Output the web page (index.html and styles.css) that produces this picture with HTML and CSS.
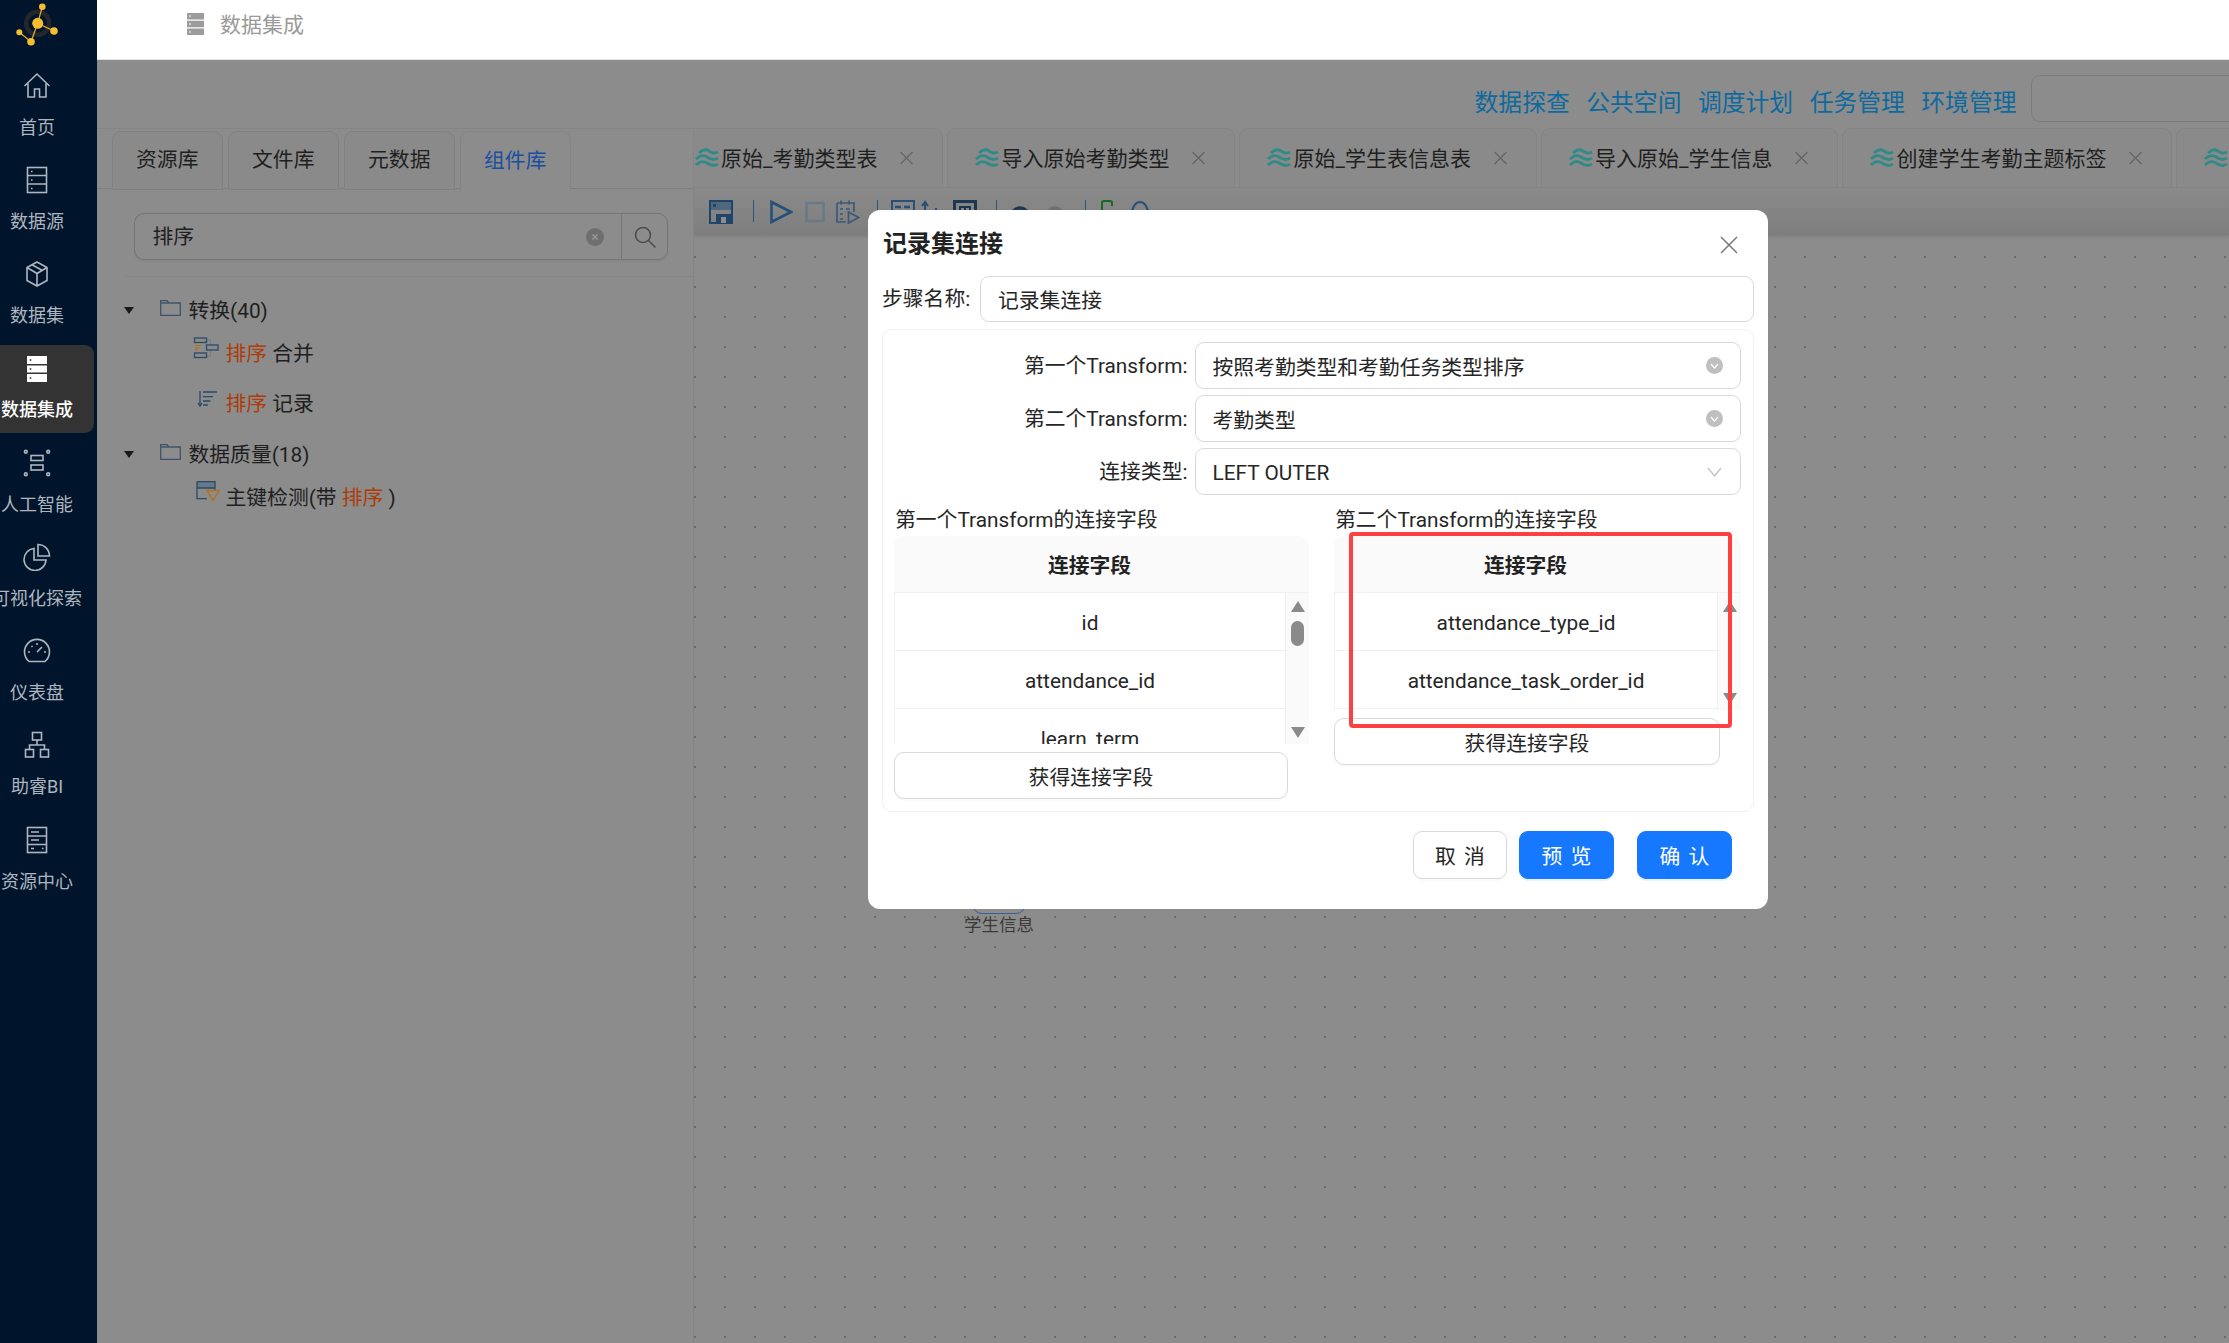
FILE: index.html
```html
<!DOCTYPE html>
<html lang="zh">
<head>
    <meta charset="UTF-8">
    <title>数据集成</title>
    <link rel="stylesheet" href="styles.css">
</head>
<body>
    <aside class="sidebar">
        <div class="logo">
            <svg width="97" height="50" viewBox="0 0 97 50">
                <circle cx="37.700" cy="23.300" r="11.500" fill="none" stroke="#23272c" stroke-width="4.500"/>
                <path d="M37.700 23.300L42.300 6.700M37.700 23.300L54 31M37.700 23.300L31 41.700L19.300 32.300" stroke="#e0aa2c" stroke-width="1.300" fill="none"/>
                <circle cx="37.700" cy="23.300" r="5.500" fill="#f6bd2e"/>
                <circle cx="42.300" cy="6.700" r="3.300" fill="#f6bd2e"/>
                <circle cx="54" cy="31" r="3.800" fill="#f6bd2e"/>
                <circle cx="19.300" cy="32.300" r="3" fill="#f6bd2e"/>
                <circle cx="31" cy="41.700" r="3.800" fill="#f6bd2e"/>
            </svg>
        </div>
        <div class="side-item">
            <svg class="side-icon" viewBox="0 0 28 28"><path d="M1.500 14L14 2l12.500 12M5 11.500V25h6.500v-8h5v8H23V11.500"/></svg>
            <span>首页</span>
        </div>
        <div class="side-item">
            <svg class="side-icon" viewBox="0 0 28 28"><rect x="4.500" y="1.500" width="19" height="25"/><path d="M4.500 9.500h19M4.500 18h19M8 5.500h1.500M8 14h1.500M8 22.500h1.500"/></svg>
            <span>数据源</span>
        </div>
        <div class="side-item">
            <svg class="side-icon" viewBox="0 0 28 28"><path d="M14 2l10 5.500v13L14 26 4 20.500v-13zM4 7.500l10 6 10-6M14 13.500V26M9 4.800l10 5.500"/></svg>
            <span>数据集</span>
        </div>
        <div class="side-item active">
            <svg class="side-icon solid" viewBox="0 0 28 28"><path d="M4 1h20v8H4zM4 10.500h20v7H4zM4 19h20v8H4z"/><circle cx="7.500" cy="5" r="1" fill="#555"/><circle cx="7.500" cy="14" r="1" fill="#555"/><circle cx="7.500" cy="23" r="1" fill="#555"/></svg>
            <span>数据集成</span>
        </div>
        <div class="side-item">
            <svg class="side-icon" viewBox="0 0 28 28"><rect x="8" y="6.500" width="12" height="5"/><rect x="8" y="16" width="12" height="5"/><circle cx="2.800" cy="2.800" r="1.400"/><circle cx="25.200" cy="2.800" r="1.400"/><circle cx="2.800" cy="25.200" r="1.400"/><circle cx="25.200" cy="25.200" r="1.400"/></svg>
            <span>人工智能</span>
        </div>
        <div class="side-item">
            <svg class="side-icon" viewBox="0 0 28 28"><path d="M11 5.500A11 11 0 1 0 23 17H11zM15 1.500A11.500 11.500 0 0 1 26.500 13H15z"/></svg>
            <span>可视化探索</span>
        </div>
        <div class="side-item">
            <svg class="side-icon" viewBox="0 0 28 28"><path d="M6 24.500A12.500 12.500 0 1 1 22 24.500zM14 15l5-5M5 15h2M21 15h2M8.500 9l1 1M14 6v2"/></svg>
            <span>仪表盘</span>
        </div>
        <div class="side-item">
            <svg class="side-icon" viewBox="0 0 28 28"><rect x="9.500" y="1.500" width="9" height="7.500"/><rect x="2.500" y="18.500" width="8" height="7.500"/><rect x="17.500" y="18.500" width="8" height="7.500"/><path d="M14 9v5M6.500 18.500V14h15v4.500"/></svg>
            <span>助睿BI</span>
        </div>
        <div class="side-item">
            <svg class="side-icon" viewBox="0 0 28 28"><rect x="4.500" y="1.500" width="19" height="25"/><path d="M4.500 10h19M4.500 18.500h19M8 6h8M8 14h8M8 22.500h3M19 22.500h1.500"/></svg>
            <span>资源中心</span>
        </div>
    </aside>

    <div class="content">
        <header class="topbar">
            <svg class="topbar-icon" viewBox="0 0 17 22"><path d="M0 0h17v6.500H0zM0 7.800h17v6.500H0zM0 15.500h17V22H0z" fill="#9c9c9c"/><path d="M2 3h2M2 11h2M2 19h2" stroke="#fff" stroke-width="1.200"/></svg>
            <span>数据集成</span>
        </header>

        <main class="main">
            <nav class="links">
                <a>数据探查</a>
                <a>公共空间</a>
                <a>调度计划</a>
                <a>任务管理</a>
                <a>环境管理</a>
                <div class="links-input"></div>
            </nav>

            <div class="workspace">
                <section class="library">
                    <div class="lib-tabs">
                        <div class="lib-tab">资源库</div>
                        <div class="lib-tab">文件库</div>
                        <div class="lib-tab">元数据</div>
                        <div class="lib-tab current">组件库</div>
                    </div>
                    <div class="search">
                        <div class="search-input">
                            <span>排序</span>
                            <svg width="18" height="18" viewBox="0 0 18 18"><circle cx="9" cy="9" r="9" fill="#6f6f6f"/><path d="M6.500 6.500l5 5M11.500 6.500l-5 5" stroke="#9a9a9a" stroke-width="1.300"/></svg>
                        </div>
                        <div class="search-btn">
                            <svg width="24" height="24" viewBox="0 0 24 24"><circle cx="10" cy="10" r="7.500" fill="none" stroke="#4c4c4c" stroke-width="1.600"/><path d="M15.500 15.500L22.500 22.500" stroke="#4c4c4c" stroke-width="1.600"/></svg>
                        </div>
                    </div>
                    <div class="lib-divider"></div>

                    <div class="tree">
                        <div class="tree-branch">
                            <i class="tree-arrow"></i>
                            <svg class="folder" viewBox="0 0 21 16"><path d="M.7 15.300V.7h6.500l1.500 2.300h11.600v12.300zM.7 3h8" fill="none" stroke="#3f5468" stroke-width="1.300"/></svg>
                            <span>转换(40)</span>
                        </div>
                        <div class="tree-leaf">
                            <svg class="leaf-icon" viewBox="0 0 28 22"><path d="M13.500 3h4v5M13.500 19h4v-6" fill="none" stroke="#6f7f8f"/><g fill="none" stroke="#2a4a66" stroke-width="1.300"><rect x="1.500" y="1" width="12" height="4.500"/><rect x="13.500" y="8" width="11.500" height="5"/><rect x="1.500" y="16" width="12" height="4.500"/></g><path d="M2 8.500h6M2 10.800h4.500M2 13h3" stroke="#b5701a" stroke-width="1.200"/></svg>
                            <span><em>排序</em> 合并</span>
                        </div>
                        <div class="tree-leaf">
                            <svg class="leaf-icon" viewBox="0 0 28 22"><path d="M7 4v14M5 16l2 3 2-3M10 5h14M10 9.700h10M10 14h7.500M10 18h5" fill="none" stroke="#2a4a66" stroke-width="1.300"/></svg>
                            <span><em>排序</em> 记录</span>
                        </div>
                        <div class="tree-branch">
                            <i class="tree-arrow"></i>
                            <svg class="folder" viewBox="0 0 21 16"><path d="M.7 15.300V.7h6.500l1.500 2.300h11.600v12.300zM.7 3h8" fill="none" stroke="#3f5468" stroke-width="1.300"/></svg>
                            <span>数据质量(18)</span>
                        </div>
                        <div class="tree-leaf">
                            <svg class="leaf-icon" viewBox="0 0 28 22"><path d="M4 1h18v6H4z" fill="#66788a"/><path d="M4 .7h18v8M4 .7v17h10M4 7h18" fill="none" stroke="#2a4a66" stroke-width="1.300"/><path d="M14 9.500h12l-6 10z" fill="none" stroke="#b5701a" stroke-width="1.400"/></svg>
                            <span>主键检测(带 <em>排序</em> )</span>
                        </div>
                    </div>
                </section>

                <section class="editor">
                    <div class="job-tabs">
                        <div class="job-tab">
                            <svg class="wave" viewBox="0 0 24 20"><path d="M4 5C8 1 11 1 14 3S19 6 23 4M1 11C5 7 9 7 12 9S19 13 23 10M1 17C5 13 9 13 12 15S19 19 23 16"/></svg>
                            <span>原始_考勤类型表</span>
                            <svg class="job-close" viewBox="0 0 14 14"><path d="M1 1l12 12M13 1L1 13"/></svg>
                        </div>
                        <div class="job-tab">
                            <svg class="wave" viewBox="0 0 24 20"><path d="M4 5C8 1 11 1 14 3S19 6 23 4M1 11C5 7 9 7 12 9S19 13 23 10M1 17C5 13 9 13 12 15S19 19 23 16"/></svg>
                            <span>导入原始考勤类型</span>
                            <svg class="job-close" viewBox="0 0 14 14"><path d="M1 1l12 12M13 1L1 13"/></svg>
                        </div>
                        <div class="job-tab">
                            <svg class="wave" viewBox="0 0 24 20"><path d="M4 5C8 1 11 1 14 3S19 6 23 4M1 11C5 7 9 7 12 9S19 13 23 10M1 17C5 13 9 13 12 15S19 19 23 16"/></svg>
                            <span>原始_学生表信息表</span>
                            <svg class="job-close" viewBox="0 0 14 14"><path d="M1 1l12 12M13 1L1 13"/></svg>
                        </div>
                        <div class="job-tab">
                            <svg class="wave" viewBox="0 0 24 20"><path d="M4 5C8 1 11 1 14 3S19 6 23 4M1 11C5 7 9 7 12 9S19 13 23 10M1 17C5 13 9 13 12 15S19 19 23 16"/></svg>
                            <span>导入原始_学生信息</span>
                            <svg class="job-close" viewBox="0 0 14 14"><path d="M1 1l12 12M13 1L1 13"/></svg>
                        </div>
                        <div class="job-tab">
                            <svg class="wave" viewBox="0 0 24 20"><path d="M4 5C8 1 11 1 14 3S19 6 23 4M1 11C5 7 9 7 12 9S19 13 23 10M1 17C5 13 9 13 12 15S19 19 23 16"/></svg>
                            <span>创建学生考勤主题标签</span>
                            <svg class="job-close" viewBox="0 0 14 14"><path d="M1 1l12 12M13 1L1 13"/></svg>
                        </div>
                        <div class="job-tab">
                            <svg class="wave" viewBox="0 0 24 20"><path d="M4 5C8 1 11 1 14 3S19 6 23 4M1 11C5 7 9 7 12 9S19 13 23 10M1 17C5 13 9 13 12 15S19 19 23 16"/></svg>
                        </div>
                    </div>

                    <div class="toolbar">
                        <svg class="tool t-save" viewBox="0 0 24 24"><path d="M1 1h22v22H1z" fill="none" stroke="#1f4668" stroke-width="2"/><path d="M2 2h20v8H2z" fill="#50687e"/><path d="M4 4h3v3H4z" fill="#1f4668"/><path d="M7 14h15v9H7z" fill="#1f4668"/><path d="M12 17h5v6h-5z" fill="#8c8c8c"/></svg>
                        <i class="tool-sep"></i>
                        <svg class="tool t-play" viewBox="0 0 23 24"><path d="M1.500 2L21 12 1.500 22z" fill="none" stroke="#26507a" stroke-width="2.600"/></svg>
                        <svg class="tool t-stop" viewBox="0 0 20 22"><rect x="1.500" y="2" width="17" height="18" fill="none" stroke="#687a8a" stroke-width="2.600"/></svg>
                        <svg class="tool t-sched" viewBox="0 0 24 24"><path d="M1 3h17v9M1 3v19h9M5 .5v4M13 .5v4M4 9h3M4 14h3M4 19h3M10 9h4" fill="none" stroke="#3c5a76" stroke-width="1.700"/><path d="M12.500 12l10 5.500-10 5.500z" fill="none" stroke="#3c5a76" stroke-width="1.700"/></svg>
                        <i class="tool-sep s2"></i>
                        <svg class="tool t-a" viewBox="0 0 24 24"><rect x="1" y="1" width="22" height="22" fill="none" stroke="#26507a" stroke-width="2"/><path d="M4 7h6M13 7h6" stroke="#26507a" stroke-width="2.400"/></svg>
                        <svg class="tool t-b" viewBox="0 0 21 24"><path d="M5 2v20M2 6l3-4 3 4M16 8v14" fill="none" stroke="#26507a" stroke-width="2"/></svg>
                        <svg class="tool t-c" viewBox="0 0 24 24"><rect x="1.500" y="1.500" width="21" height="21" fill="none" stroke="#1c3750" stroke-width="3"/><path d="M7 17V7h10v10M12 7v8" fill="none" stroke="#1c3750" stroke-width="2"/></svg>
                        <i class="tool-sep s3"></i>
                        <svg class="tool t-d" viewBox="0 0 20 24"><path d="M2 16a8 8 0 0 1 16 0" fill="none" stroke="#1c3750" stroke-width="3.500"/></svg>
                        <svg class="tool t-e" viewBox="0 0 20 24"><path d="M2 16a8 8 0 0 1 16 0" fill="none" stroke="#707070" stroke-width="3.500"/></svg>
                        <i class="tool-sep s4"></i>
                        <svg class="tool t-f" viewBox="0 0 12 24"><path d="M1 24V3q0-2 2-2h6q2 0 2 2v3" fill="none" stroke="#156b20" stroke-width="2"/></svg>
                        <svg class="tool t-g" viewBox="0 0 20 24"><path d="M1 16q2-14 9-14t9 14" fill="none" stroke="#26507a" stroke-width="2"/></svg>
                    </div>

                    <div class="canvas">
                        <div class="canvas-node">
                            <div class="node-box"></div>
                            <span>学生信息</span>
                        </div>
                    </div>
                </section>
            </div>
        </main>
    </div>

    <div class="modal">
        <div class="modal-head">
            <h3>记录集连接</h3>
            <svg class="modal-close" viewBox="0 0 18 18"><path d="M1 1l16 16M17 1L1 17"/></svg>
        </div>
        <div class="step-row">
            <label>步骤名称:</label>
            <div class="field grow">记录集连接</div>
        </div>
        <div class="panel">
            <div class="form-row">
                <label>第一个Transform:</label>
                <div class="field grow">
                    <span>按照考勤类型和考勤任务类型排序</span>
                    <i class="field-clear"><svg width="9" height="6" viewBox="0 0 9 6"><path d="M1 1l3.500 4L8 1" fill="none" stroke="#fff" stroke-width="1.200"/></svg></i>
                </div>
            </div>
            <div class="form-row">
                <label>第二个Transform:</label>
                <div class="field grow">
                    <span>考勤类型</span>
                    <i class="field-clear"><svg width="9" height="6" viewBox="0 0 9 6"><path d="M1 1l3.500 4L8 1" fill="none" stroke="#fff" stroke-width="1.200"/></svg></i>
                </div>
            </div>
            <div class="form-row">
                <label>连接类型:</label>
                <div class="field grow">
                    <span class="outer">LEFT OUTER</span>
                    <svg class="chevron" width="15" height="10" viewBox="0 0 15 10"><path d="M1 1l6.500 8L14 1" fill="none" stroke="#bfbfbf" stroke-width="1.200"/></svg>
                </div>
            </div>

            <div class="columns">
                <div class="column first">
                    <div class="column-title">第一个Transform的连接字段</div>
                    <div class="table-head">连接字段</div>
                    <div class="table-body">
                        <div class="rows">
                            <div class="cell">id</div>
                            <div class="cell">attendance_id</div>
                            <div class="cell">learn_term</div>
                        </div>
                        <div class="scrollbar">
                            <i class="arrow-up"></i>
                            <i class="thumb"></i>
                            <i class="arrow-down"></i>
                        </div>
                    </div>
                    <button class="fetch-btn">获得连接字段</button>
                </div>
                <div class="column second">
                    <div class="column-title">第二个Transform的连接字段</div>
                    <div class="table-head">连接字段</div>
                    <div class="table-body">
                        <div class="rows">
                            <div class="cell">attendance_type_id</div>
                            <div class="cell">attendance_task_order_id</div>
                        </div>
                        <div class="scrollbar">
                            <i class="arrow-up"></i>
                            <i class="arrow-down"></i>
                        </div>
                    </div>
                    <button class="fetch-btn">获得连接字段</button>
                </div>
            </div>
        </div>
        <div class="modal-foot">
            <button class="btn">取 消</button>
            <button class="btn primary">预 览</button>
            <button class="btn primary wide-gap">确 认</button>
        </div>
        <div class="red-mark"></div>
    </div>
</body>
</html>
```

FILE: styles.css
```css
* {
    box-sizing: border-box;
}
body {
    margin: 0;
    width: 2229px;
    height: 1343px;
    display: flex;
    overflow: hidden;
    position: relative;
    font-family: Roboto, "Noto Sans CJK SC", sans-serif;
    font-size: 20.8px;
    color: #262626;
    background-color: #8c8c8c;
}
svg {
    display: block;
    flex-shrink: 0;
}

/* sidebar */
.sidebar {
    width: 97px;
    height: 100%;
    flex-shrink: 0;
    background-color: #00142b;
    color: #aeb6bf;
}
.logo {
    height: 62px;
}
.side-item {
    width: 94px;
    height: 88px;
    margin-bottom: 6.2px;
    padding: 10px 20px 0 0;
    display: flex;
    flex-direction: column;
    align-items: center;
    border-radius: 0 9px 9px 0;
    font-size: 18px;
    line-height: 26px;
    white-space: nowrap;
}
.side-item span {
    margin-top: 15px;
}
.side-icon {
    width: 28px;
    height: 28px;
    fill: none;
    stroke: #aeb6bf;
    stroke-width: 1.6;
}
.side-icon.solid {
    fill: #fff;
    stroke: none;
}
.side-item.active {
    background-color: #333;
    color: #fff;
    font-weight: 500;
}
.side-item.active span {
    margin-top: 14px;
}

/* header */
.content {
    flex: 1;
    min-width: 0;
    display: flex;
    flex-direction: column;
}
.topbar {
    height: 60px;
    flex-shrink: 0;
    padding-left: 90px;
    display: flex;
    align-items: center;
    gap: 16px;
    background-color: #fff;
    border-bottom: 1px solid #e4e4e4;
    color: #9a9a9a;
    font-size: 21px;
}
.topbar-icon {
    width: 17px;
    height: 22px;
    margin-top: -12px;
}
.topbar span {
    margin-top: -14px;
}

.main {
    flex: 1;
    display: flex;
    flex-direction: column;
    min-height: 0;
}
.links {
    height: 68px;
    flex-shrink: 0;
    padding-top: 12px;
    display: flex;
    justify-content: flex-end;
    align-items: center;
    gap: 16.5px;
    color: #0d6a9e;
    font-size: 23.8px;
}
.links-input {
    width: 258px;
    height: 47px;
    flex-shrink: 0;
    margin-left: -2px;
    margin-right: -60px;
    margin-bottom: 4px;
    border: 1px solid #7c7c7c;
    border-radius: 9px;
}
.workspace {
    flex: 1;
    display: flex;
    min-height: 0;
}

/* left panel */
.library {
    width: 597px;
    flex-shrink: 0;
    border-right: 1px solid #858585;
}
.lib-tabs {
    height: 61px;
    padding: 2px 0 0 14.5px;
    display: flex;
    gap: 4.5px;
    border-top: 1px solid #848484;
    border-bottom: 1px solid #7e7e7e;
}
.lib-tab {
    width: 111.5px;
    height: 59px;
    padding-bottom: 5px;
    display: flex;
    align-items: center;
    justify-content: center;
    border: 1px solid #808080;
    border-radius: 9px 9px 0 0;
    background-color: #8a8a8a;
    color: #1f1f1f;
}
.lib-tab.current {
    height: 60px;
    color: #1a4fa0;
    background-color: #8c8c8c;
    border-color: #848484;
    border-bottom-color: #8c8c8c;
}
.search {
    height: 47px;
    margin: 24px 25px 0 36.5px;
    display: flex;
    box-shadow: 0 2px 2px rgba(0, 0, 0, 0.05);
    border-radius: 10px;
}
.search-input {
    flex: 1;
    padding: 0 17px 0 18px;
    display: flex;
    align-items: center;
    justify-content: space-between;
    border: 1px solid #757575;
    border-right: none;
    border-radius: 10px 0 0 10px;
    color: #1f1f1f;
}
.search-input span {
    margin-top: -3px;
}
.search-btn {
    width: 47px;
    display: flex;
    align-items: center;
    justify-content: center;
    border: 1px solid #757575;
    border-radius: 0 10px 10px 0;
}
.lib-divider {
    height: 1px;
    margin: 16px 0 0 28px;
    background-color: #858585;
}
.tree {
    padding-top: 2px;
    color: #1f1f1f;
}
.tree-branch {
    height: 40px;
    margin-top: 11px;
    padding-left: 26.5px;
    display: flex;
    align-items: center;
}
.tree-branch span, .tree-leaf span {
    margin-top: -3px;
}
.tree-arrow {
    width: 0;
    height: 0;
    border-left: 5.5px solid transparent;
    border-right: 5.5px solid transparent;
    border-top: 7px solid #1a1a1a;
}
.folder {
    width: 21px;
    height: 16px;
    margin: -4px 8px 0 26px;
}
.tree-leaf {
    height: 40px;
    margin-top: 3px;
    padding-left: 96px;
    display: flex;
    align-items: center;
}
.tree-leaf + .tree-leaf {
    margin-top: 10px;
}
.leaf-icon {
    width: 28px;
    height: 22px;
    margin-right: 4.5px;
    margin-top: -10px;
}
.tree-leaf em {
    font-style: normal;
    color: #ad3d08;
}

/* editor */
.editor {
    flex: 1;
    min-width: 0;
    display: flex;
    flex-direction: column;
    overflow: hidden;
}
.job-tabs {
    height: 60px;
    flex-shrink: 0;
    margin-left: -27px;
    display: flex;
    gap: 4px;
    border-bottom: 1px solid #848484;
}
.job-tab {
    height: 59px;
    flex-shrink: 0;
    padding: 0 28px 0 27px;
    display: flex;
    align-items: center;
    border: 1px solid #848484;
    border-bottom: none;
    border-radius: 9px 9px 0 0;
    background-color: #8a8a8a;
    font-size: 21px;
    color: #1f1f1f;
    white-space: nowrap;
}
.job-tab span {
    margin-top: -2px;
}
.wave {
    width: 24px;
    height: 20px;
    margin-right: 2px;
    fill: none;
    stroke: #2f8b87;
    stroke-width: 2.8;
}
.job-close {
    width: 15px;
    height: 14px;
    margin-left: 22px;
    fill: none;
    stroke: #666;
    stroke-width: 1.3;
}
.toolbar {
    height: 47px;
    flex-shrink: 0;
    padding: 12px 0 0 15px;
    display: flex;
    align-items: flex-start;
    background: linear-gradient(#8a8a8a, #7e7e7e);
    box-shadow: 0 2px 2px rgba(0, 0, 0, 0.08);
}
.tool {
    width: 24px;
    height: 24px;
}
.tool-sep {
    width: 1px;
    height: 22px;
    margin-left: 20px;
    background-color: #1f5a8c;
}
.t-play { width: 23px; margin-left: 16px; }
.t-stop { width: 20px; margin-left: 12px; }
.t-sched { margin-left: 11px; }
.tool-sep.s2 { margin-left: 17px; }
.t-a { margin-left: 13px; }
.t-b { width: 21px; margin-left: 5px; }
.t-c { margin-left: 12px; }
.tool-sep.s3 { margin-left: 19px; }
.t-d { width: 20px; margin-left: 13px; }
.t-e { width: 20px; margin-left: 15px; }
.tool-sep.s4 { margin-left: 20px; }
.t-f { width: 12px; margin-left: 15px; }
.t-g { width: 20px; margin-left: 17px; }

.canvas {
    flex: 1;
    position: relative;
    background-image: radial-gradient(circle, #6c6c6c 0.8px, transparent 1.2px);
    background-size: 30px 30px;
    background-position: -14px 7px;
}
.canvas-node {
    position: absolute;
    left: 260px;
    top: 629px;
    width: 90px;
    display: flex;
    flex-direction: column;
    align-items: center;
    font-size: 17.5px;
    line-height: 22px;
    color: #3a3a3a;
}
.node-box {
    width: 54px;
    height: 50px;
    border: 1.5px solid #3a5a9a;
    border-radius: 10px;
}

/* modal */
.modal {
    position: absolute;
    left: 868px;
    top: 210px;
    width: 900px;
    height: 699px;
    padding: 0 14px;
    background-color: #fff;
    border-radius: 12px;
}
.modal-head {
    height: 66px;
    display: flex;
    align-items: center;
    justify-content: space-between;
    padding: 0 16px 0 1px;
}
.modal-head h3 {
    margin: -3px 0 0;
    font-size: 24px;
    font-weight: 700;
    color: #222;
}
.modal-close {
    width: 18px;
    height: 18px;
    margin-top: 4px;
    fill: none;
    stroke: #777;
    stroke-width: 1.5;
}
.step-row {
    display: flex;
    align-items: center;
    gap: 7px;
}
.step-row label {
    width: 91px;
    margin-top: -4px;
    white-space: nowrap;
}
.field {
    height: 47px;
    padding: 0 17px;
    display: flex;
    align-items: center;
    justify-content: space-between;
    border: 1px solid #d9d9d9;
    border-radius: 9px;
}
.grow {
    flex: 1;
}
.step-row .field {
    height: 46px;
}
.panel {
    height: 483px;
    margin-top: 7px;
    padding: 12px 12px 0 11px;
    border: 1px solid #f0f0f0;
    border-radius: 10px;
}
.form-row {
    display: flex;
    align-items: center;
    gap: 7px;
    margin-bottom: 6px;
}
.form-row label {
    width: 293.5px;
    margin-top: -3px;
    text-align: right;
    white-space: nowrap;
}
.field .outer {
    margin-top: 2px;
}
.field-clear {
    width: 17px;
    height: 17px;
    display: flex;
    align-items: center;
    justify-content: center;
    border-radius: 50%;
    background-color: #bfbfbf;
}
.chevron {
    margin-right: 1px;
}
.columns {
    display: flex;
    gap: 25px;
    margin-top: 11px;
}
.column.first {
    width: 415px;
}
.column.second {
    width: 407px;
}
.column-title {
    height: 28px;
    margin-bottom: 2px;
    padding-left: 1px;
    line-height: 28px;
    white-space: nowrap;
}
.table-head {
    height: 57px;
    padding-right: 24px;
    display: flex;
    align-items: center;
    justify-content: center;
    background-color: #fafafa;
    border-radius: 10px 10px 0 0;
    border-bottom: 1px solid #f0f0f0;
    font-weight: 700;
    color: #222;
}
.table-body {
    display: flex;
    overflow: hidden;
}
.first .table-body {
    height: 151px;
}
.second .table-body {
    height: 117px;
}
.rows {
    flex: 1;
    border-left: 1px solid #f0f0f0;
}
.cell {
    height: 58px;
    padding-top: 2px;
    display: flex;
    align-items: center;
    justify-content: center;
    border-bottom: 1px solid #f0f0f0;
}
.scrollbar {
    width: 24px;
    flex-shrink: 0;
    padding: 8px 0 6px;
    display: flex;
    flex-direction: column;
    align-items: center;
    background-color: #fafafa;
    border-left: 1px solid #f0f0f0;
}
.arrow-up, .arrow-down {
    width: 0;
    height: 0;
    border-left: 7.5px solid transparent;
    border-right: 7.5px solid transparent;
}
.arrow-up {
    border-bottom: 11px solid #8a8a8a;
}
.arrow-down {
    margin-top: auto;
    border-top: 11px solid #8a8a8a;
}
.thumb {
    width: 13px;
    height: 25px;
    margin-top: 9px;
    border-radius: 7px;
    background-color: #8a8a8a;
}
.fetch-btn {
    display: block;
    height: 47px;
    margin-top: 8px;
    background-color: #fff;
    border: 1px solid #d9d9d9;
    border-radius: 10px;
    box-shadow: 0 2px 0 rgba(0, 0, 0, 0.02);
    font: inherit;
    color: #262626;
}
.first .fetch-btn {
    width: 394px;
}
.second .fetch-btn {
    width: 386px;
}
.modal-foot {
    margin-top: 19px;
    padding-right: 22px;
    display: flex;
    justify-content: flex-end;
    gap: 12px;
}
.btn {
    width: 94px;
    height: 48px;
    padding: 0;
    background-color: #fff;
    border: 1px solid #d9d9d9;
    border-radius: 9px;
    box-shadow: 0 2px 0 rgba(0, 0, 0, 0.02);
    font: inherit;
    word-spacing: 3px;
    color: #262626;
}
.btn.primary {
    width: 95px;
    background-color: #1677ff;
    border-color: #1677ff;
    box-shadow: 0 2px 0 rgba(5, 145, 255, 0.1);
    color: #fff;
}
.btn.wide-gap {
    margin-left: 11px;
}
.red-mark {
    position: absolute;
    left: 481px;
    top: 322px;
    width: 383px;
    height: 196px;
    border: 4px solid #ff4040;
    border-radius: 4px;
}
```
